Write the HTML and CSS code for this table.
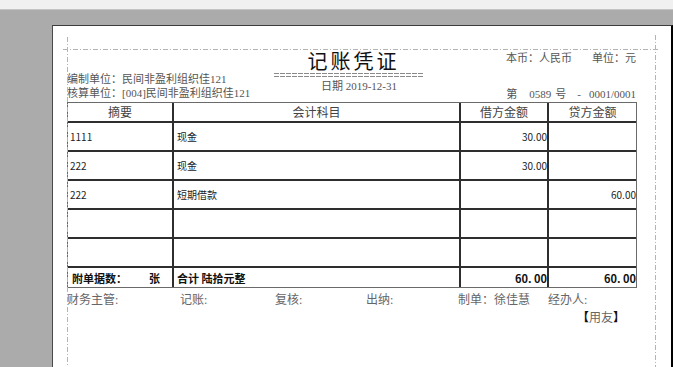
FILE: index.html
```html
<!DOCTYPE html>
<html lang="zh-CN">
<head>
<meta charset="utf-8">
<title>记账凭证</title>
<link rel="stylesheet" href="styles.css">
</head>
<body>
<div class="topbar"></div>
<div class="stage">
  <div class="page">
    <div class="guide guide-h"></div>
    <div class="guide guide-vl"></div>
    <div class="guide guide-vr"></div>
    <div class="sheet">
      <div class="head">
        <div class="head-left">
          <div>编制单位：民间非盈利组织佳121</div>
          <div>核算单位：[004]民间非盈利组织佳121</div>
        </div>
        <div class="head-center">
          <div class="title">记账凭证</div>
          <div class="rule"></div>
          <div class="date">日期 2019-12-31</div>
        </div>
        <div class="head-right">
          <div class="currency"><span>本币：人民币</span><span class="unit">单位：元</span></div>
          <div class="serial"><span>第</span><span class="s1">0589</span><span class="s2">号</span><span class="s3">-</span><span class="s4">0001/0001</span></div>
        </div>
      </div>
      <table class="voucher">
        <colgroup>
          <col class="c1"><col class="c2"><col class="c3"><col class="c4">
        </colgroup>
        <thead>
          <tr><th>摘要</th><th>会计科目</th><th>借方金额</th><th>贷方金额</th></tr>
        </thead>
        <tbody>
          <tr><td>1111</td><td class="subj">现金</td><td class="amt">30.00</td><td class="amt"></td></tr>
          <tr><td>222</td><td class="subj">现金</td><td class="amt">30.00</td><td class="amt"></td></tr>
          <tr><td>222</td><td class="subj">短期借款</td><td class="amt"></td><td class="amt">60.00</td></tr>
          <tr><td></td><td class="subj"></td><td class="amt"></td><td class="amt"></td></tr>
          <tr><td></td><td class="subj"></td><td class="amt"></td><td class="amt"></td></tr>
          <tr class="total"><td class="att">附单据数：<span class="zhang">张</span></td><td class="subj">合计 陆拾元整</td><td class="amt">60. 00</td><td class="amt">60. 00</td></tr>
        </tbody>
      </table>
      <div class="footer">
        <span>财务主管:</span>
        <span>记账:</span>
        <span>复核:</span>
        <span>出纳:</span>
        <span>制单：徐佳慧</span>
        <span>经办人:</span>
      </div>
      <div class="brand"><b>【</b>用友<b>】</b></div>
    </div>
  </div>
</div>
</body>
</html>
```

FILE: styles.css
```css
html, body {
  margin: 0;
  padding: 0;
  overflow: hidden;
}

body {
  width: 673px;
  height: 367px;
  background: #ababab;
  font-family: "Noto Sans CJK SC", "Noto Sans", sans-serif;
}

.topbar {
  height: 9px;
  background: #f0f0f0;
  border-bottom: 1px solid #c4c4c4;
}

.stage {
  padding: 15px 0 0 52px;
}

.page {
  position: relative;
  width: 618px;
  height: 360px;
  background: #ffffff;
  border-top: 1px solid #3c3c3c;
  border-left: 1px solid #4a4a4a;
  border-right: 2px solid #000000;
}

.guide {
  position: absolute;
}

.guide-h {
  left: 10px;
  top: 23px;
  width: 597px;
  height: 1px;
  background: repeating-linear-gradient(to right, #b4b4b4 0 5px, transparent 5px 7px, #b4b4b4 7px 8px, transparent 8px 10px);
}

.guide-vl {
  left: 14px;
  top: 11px;
  width: 1px;
  height: 360px;
  background: repeating-linear-gradient(to bottom, #b4b4b4 0 5px, transparent 5px 7px, #b4b4b4 7px 8px, transparent 8px 10px);
}

.guide-vr {
  left: 602px;
  top: 9px;
  width: 1px;
  height: 360px;
  background: repeating-linear-gradient(to bottom, #b4b4b4 0 5px, transparent 5px 7px, #b4b4b4 7px 8px, transparent 8px 10px);
}

.sheet {
  width: 570px;
  margin-left: 14px;
  padding-top: 24px;
}

.head {
  height: 52px;
  display: grid;
  grid-template-columns: 1fr auto 1fr;
  color: #555555;
  font-size: 11px;
  font-family: "Liberation Serif", "Noto Sans CJK SC", serif;
}

.head-left {
  align-self: end;
  line-height: 13.5px;
  padding-bottom: 2px;
  white-space: nowrap;
}

.head-center {
  display: flex;
  flex-direction: column;
  align-items: center;
  padding-top: 0.5px;
}

.title {
  font-family: "Noto Sans CJK SC", sans-serif;
  font-size: 20px;
  line-height: 20px;
  letter-spacing: 3px;
  padding-left: 3px;
  color: #111111;
}

.rule {
  width: 150px;
  height: 4px;
  margin-top: 2px;
  margin-left: -6px;
  background-image:
    repeating-linear-gradient(to right, #8a8a8a 0 5px, transparent 5px 6px),
    repeating-linear-gradient(to right, #8a8a8a 0 5px, transparent 5px 6px);
  background-size: 100% 1px, 100% 1px;
  background-position: 0 0, 0 3px;
  background-repeat: no-repeat;
}

.date {
  line-height: 13px;
  margin-top: 3px;
  padding-left: 14px;
  white-space: nowrap;
}

.head-right {
  display: flex;
  flex-direction: column;
  justify-content: space-between;
  align-items: flex-end;
  padding: 1.5px 1px 1.5px 0;
  line-height: 13px;
  white-space: nowrap;
}

.unit {
  margin-left: 20px;
}

.serial .s1 { margin-left: 12px; }
.serial .s2 { margin-left: 4px; }
.serial .s3 { margin-left: 11px; }
.serial .s4 { margin-left: 8px; }

.voucher {
  width: 570px;
  table-layout: fixed;
  border-collapse: separate;
  border-spacing: 0;
  border: 1px solid #6a6a6a;
  font-size: 10px;
  color: #222222;
}

.c1 { width: 106px; }
.c2 { width: 287px; }
.c3 { width: 88px; }
.c4 { width: 87px; }

.voucher th,
.voucher td {
  padding: 0;
  border-right: 2px solid #2e2e2e;
  border-bottom: 2px solid #2e2e2e;
  white-space: nowrap;
  overflow: visible;
}

.voucher th:last-child,
.voucher td:last-child {
  border-right: 0;
}

.voucher tr:last-child td {
  border-bottom: 0;
}

.voucher th {
  height: 18px;
  font-size: 12px;
  font-weight: normal;
  color: #444444;
  text-align: center;
  line-height: 18px;
}

.voucher td {
  height: 27px;
  padding-left: 2px;
  line-height: 14px;
}

.voucher td.subj {
  padding-left: 3px;
}

.voucher td.amt {
  text-align: right;
  padding-left: 0;
}

.voucher .total td {
  height: 19px;
  font-weight: bold;
  font-size: 11px;
  color: #111111;
}

.voucher .total td.att {
  padding-left: 4px;
}

.zhang {
  margin-left: 22px;
}

.footer {
  display: grid;
  grid-template-columns: 113px 95px 91px 92px 90px auto;
  margin-top: 4px;
  font-family: "Liberation Serif", "Noto Sans CJK SC", serif;
  font-size: 12px;
  line-height: 16px;
  color: #666666;
  white-space: nowrap;
}

.brand {
  text-align: right;
  padding-right: 12px;
  margin-top: 1px;
  font-size: 12px;
  line-height: 16px;
  color: #666666;
}

.brand b {
  color: #111111;
}
```
